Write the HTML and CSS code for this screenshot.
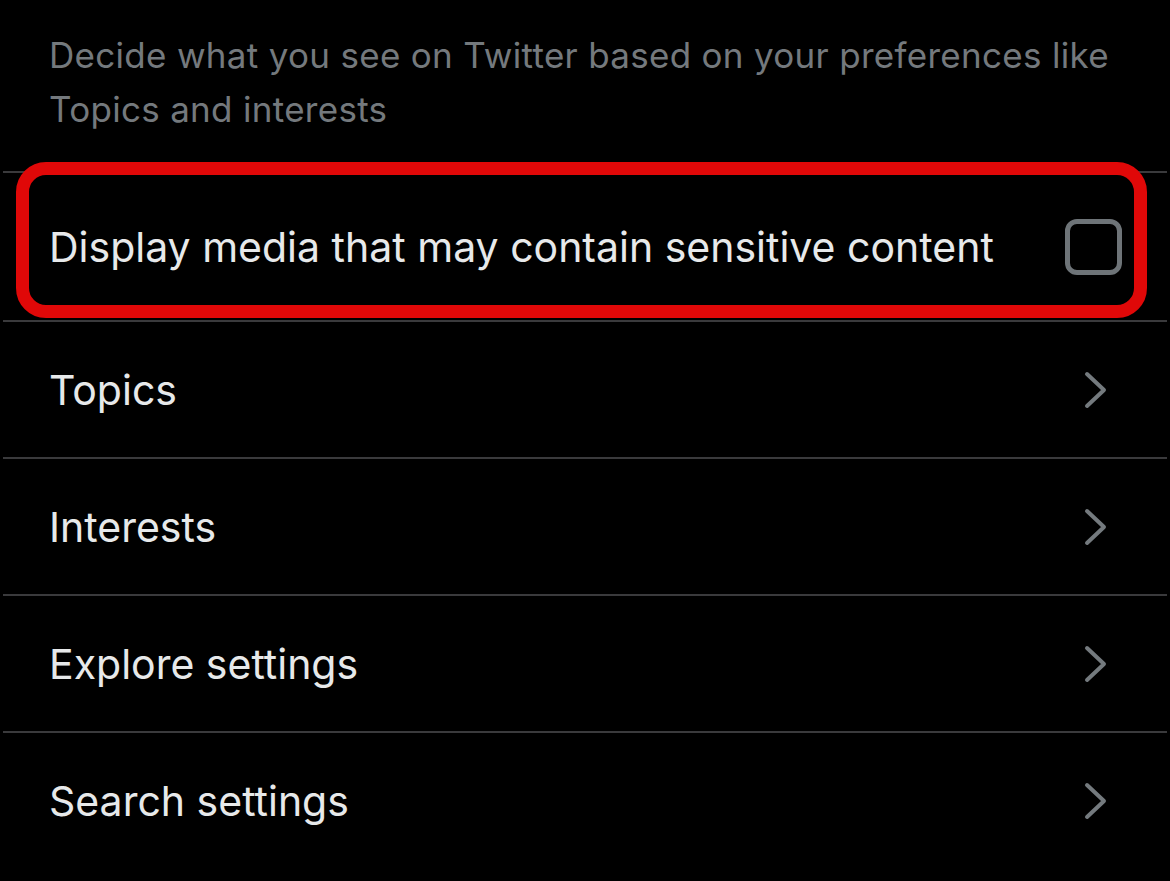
FILE: index.html
```html
<!DOCTYPE html>
<html>
<head>
<meta charset="utf-8">
<link rel="stylesheet" href="styles.css">
</head>
<body>
<div class="screen">
  <p class="desc">Decide what you see on Twitter based on your preferences like Topics and interests</p>
  <ul class="list">
    <li class="row row-first highlight">
      <span class="label">Display media that may contain sensitive content</span>
      <span class="checkbox"></span>
    </li>
    <li class="row">
      <span class="label">Topics</span>
      <svg class="chev" width="24" height="38" viewBox="0 0 24 38"><path d="M3 3 L20 19 L3 35" fill="none" stroke="#747a7e" stroke-width="4" stroke-linecap="round" stroke-linejoin="round"/></svg>
    </li>
    <li class="row">
      <span class="label">Interests</span>
      <svg class="chev" width="24" height="38" viewBox="0 0 24 38"><path d="M3 3 L20 19 L3 35" fill="none" stroke="#747a7e" stroke-width="4" stroke-linecap="round" stroke-linejoin="round"/></svg>
    </li>
    <li class="row">
      <span class="label">Explore settings</span>
      <svg class="chev" width="24" height="38" viewBox="0 0 24 38"><path d="M3 3 L20 19 L3 35" fill="none" stroke="#747a7e" stroke-width="4" stroke-linecap="round" stroke-linejoin="round"/></svg>
    </li>
    <li class="row">
      <span class="label">Search settings</span>
      <svg class="chev" width="24" height="38" viewBox="0 0 24 38"><path d="M3 3 L20 19 L3 35" fill="none" stroke="#747a7e" stroke-width="4" stroke-linecap="round" stroke-linejoin="round"/></svg>
    </li>
  </ul>
</div>
</body>
</html>
```
FILE: styles.css
```css
html, body {
  margin: 0;
  padding: 0;
  background: #000;
}
.screen {
  width: 1170px;
  height: 881px;
  overflow: hidden;
  background: #000;
  font-family: Inter, "Noto Sans", sans-serif;
}
.desc {
  margin: 0;
  padding: 28px 50px 35px 49px;
  font-size: 35px;
  letter-spacing: 0.3px;
  line-height: 54px;
  color: #74797d;
}
.list {
  list-style: none;
  margin: 0 3px;
  padding: 0;
}
.row {
  display: flex;
  align-items: center;
  justify-content: space-between;
  height: 135px;
  border-top: 2px solid #3a3a3c;
  padding: 0 59px 0 46px;
  color: #e7e9ea;
}
.row-first {
  height: 147px;
  padding-right: 45px;
}
.highlight {
  position: relative;
}
.highlight::after {
  content: "";
  position: absolute;
  left: 13px;
  right: 20px;
  top: -11px;
  bottom: 2px;
  border: 13px solid #e00808;
  border-radius: 30px;
  box-sizing: border-box;
}
.label {
  font-size: 41px;
  letter-spacing: 0;
}
.checkbox {
  width: 57px;
  height: 56px;
  box-sizing: border-box;
  border: 5px solid #6e7478;
  border-radius: 12px;
}
.chev {
  display: block;
}
```
